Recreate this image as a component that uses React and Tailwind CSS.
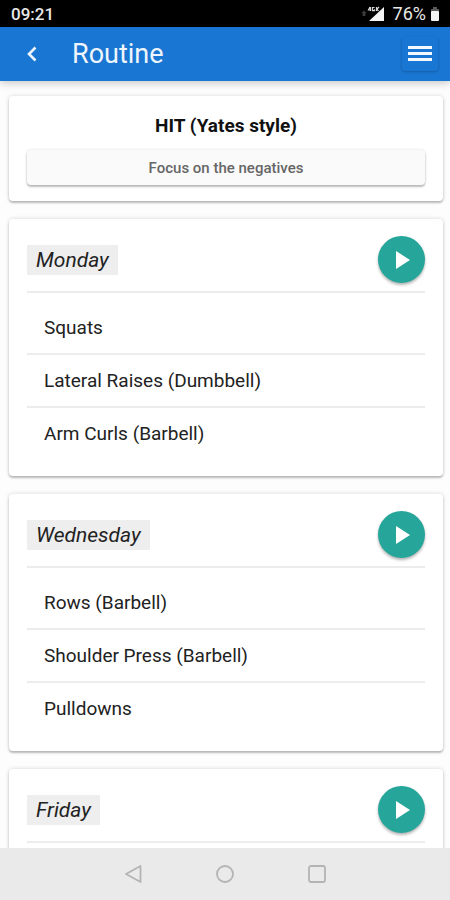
const days = [
  { name: "Monday", exercises: ["Squats", "Lateral Raises (Dumbbell)", "Arm Curls (Barbell)"] },
  { name: "Wednesday", exercises: ["Rows (Barbell)", "Shoulder Press (Barbell)", "Pulldowns"] },
  { name: "Friday", exercises: [] },
];

const cardClass =
  "shrink-0 rounded bg-white px-[18px] shadow-[0_2px_2px_0_rgba(0,0,0,0.22),0_0_4px_0_rgba(0,0,0,0.16)]";

function StatusBar() {
  return (
    <div className="flex h-[27px] shrink-0 items-center justify-between bg-black pr-[10px] pl-[11px] text-[18px] leading-[28px] text-[#e8e8e8]">
      <span className="text-[17px] font-medium">09:21</span>
      <div className="flex items-center">
        <svg width="24" height="16" viewBox="0 0 24 16" className="mr-2" aria-hidden="true">
          <path d="M3 4.5 5.5 7H4.4v3H1.6V7H.5z" fill="#3c3c3c" />
          <path d="M23 1v14H8z" fill="#f4f4f4" />
          <path d="M9 1 7.500 4H10M9.500 1v4M13.500 1.500h-2v3.200h2V3.200M15.500 1v4M18 1l-2 2 1.500 2" stroke="#d8d8d8" strokeWidth="1.200" fill="none" />
        </svg>
        <span>76%</span>
        <svg width="10" height="16" viewBox="0 0 10 16" className="ml-1" aria-hidden="true">
          <path d="M3 1h4v2h2v3H1V3h2z" fill="#5a5a5a" />
          <rect x="1" y="5" width="8" height="10" rx="1" fill="#f4f4f4" />
        </svg>
      </div>
    </div>
  );
}

function AppBar() {
  return (
    <header className="z-10 flex h-[54px] shrink-0 items-center bg-[#1976d2] pr-[12px] pl-[14px] text-[#eef5fc] shadow-[0_2px_8px_rgba(0,0,0,0.22)]">
      <button type="button" aria-label="Back" className="flex size-9 items-center justify-center">
        <svg width="12" height="16" viewBox="0 0 12 16" fill="none" stroke="currentColor" strokeWidth="2.600" aria-hidden="true">
          <path d="M9.500 1.500 3 8l6.500 6.500" />
        </svg>
      </button>
      <h1 className="ml-[22px] flex-1 text-[27px] leading-[36px]">Routine</h1>
      <button
        type="button"
        aria-label="Menu"
        className="flex h-[34px] w-9 items-center justify-center rounded-sm shadow-[0_1px_3px_rgba(0,0,0,0.22)]"
      >
        <svg width="24" height="18" viewBox="0 0 24 18" fill="#f4f9fe" aria-hidden="true">
          <rect y="1" width="24" height="3" />
          <rect y="7" width="24" height="3" />
          <rect y="13" width="24" height="3" />
        </svg>
      </button>
    </header>
  );
}

function DayCard({ day }) {
  return (
    <section className={`${cardClass} pt-[17px] pb-[15px]`}>
      <div className="flex items-center justify-between border-b-2 border-[#ececec] pb-2">
        <h2 className="bg-[#eeeeee] px-[9px] text-[21px] leading-[30px] text-[#222] italic">{day.name}</h2>
        <button
          type="button"
          aria-label={`Start ${day.name}`}
          className="flex size-[47px] items-center justify-center rounded-full bg-[#26a69a] shadow-[0_2px_3px_rgba(0,0,0,0.3)]"
        >
          <svg width="16" height="18" viewBox="0 0 16 18" fill="#fff" className="ml-[2px]" aria-hidden="true">
            <path d="M1 0v18l14-9z" />
          </svg>
        </button>
      </div>
      <ul className="pt-[9px]">
        {day.exercises.map((name) => (
          <li
            key={name}
            className="flex h-[53px] items-center border-b-2 border-[#ececec] pl-[17px] text-[19px] leading-[24px] text-[#222] last:border-transparent"
          >
            {name}
          </li>
        ))}
      </ul>
    </section>
  );
}

function NavBar() {
  return (
    <nav className="z-10 flex h-[52px] shrink-0 items-center justify-center gap-[68px] bg-[#eaeaea] text-[#b4b4b4]">
      <button type="button" aria-label="Back" className="size-6">
        <svg viewBox="0 0 24 24" fill="none" stroke="currentColor" strokeWidth="1.800" strokeLinejoin="round" aria-hidden="true">
          <path d="M19.500 4v16L5 12z" />
        </svg>
      </button>
      <button type="button" aria-label="Home" className="size-6">
        <svg viewBox="0 0 24 24" fill="none" stroke="currentColor" strokeWidth="1.800" aria-hidden="true">
          <circle cx="12" cy="12" r="8" />
        </svg>
      </button>
      <button type="button" aria-label="Recent apps" className="size-6">
        <svg viewBox="0 0 24 24" fill="none" stroke="currentColor" strokeWidth="1.800" aria-hidden="true">
          <rect x="4" y="4" width="16" height="16" rx="2" />
        </svg>
      </button>
    </nav>
  );
}

export default function App() {
  return (
    <div className="flex h-screen flex-col overflow-hidden bg-[#fdfdfd] font-[Roboto,sans-serif]">
      <StatusBar />
      <AppBar />
      <main className="flex min-h-0 flex-1 flex-col gap-[18px] overflow-hidden pt-[15px] pr-[7px] pl-[9px]">
        <section className={`${cardClass} pt-4 pb-4`}>
          <h2 className="text-center text-[19px] leading-[28px] font-bold text-[#111]">HIT (Yates style)</h2>
          <button
            type="button"
            className="mt-[10px] block h-[35px] w-full rounded-sm bg-[#fafafa] text-[15px] leading-[34px] font-medium text-[#666] shadow-[0_2px_2px_0_rgba(0,0,0,0.24),0_0_3px_0_rgba(0,0,0,0.14)]"
          >
            Focus on the negatives
          </button>
        </section>
        {days.map((day) => (
          <DayCard key={day.name} day={day} />
        ))}
      </main>
      <NavBar />
    </div>
  );
}
